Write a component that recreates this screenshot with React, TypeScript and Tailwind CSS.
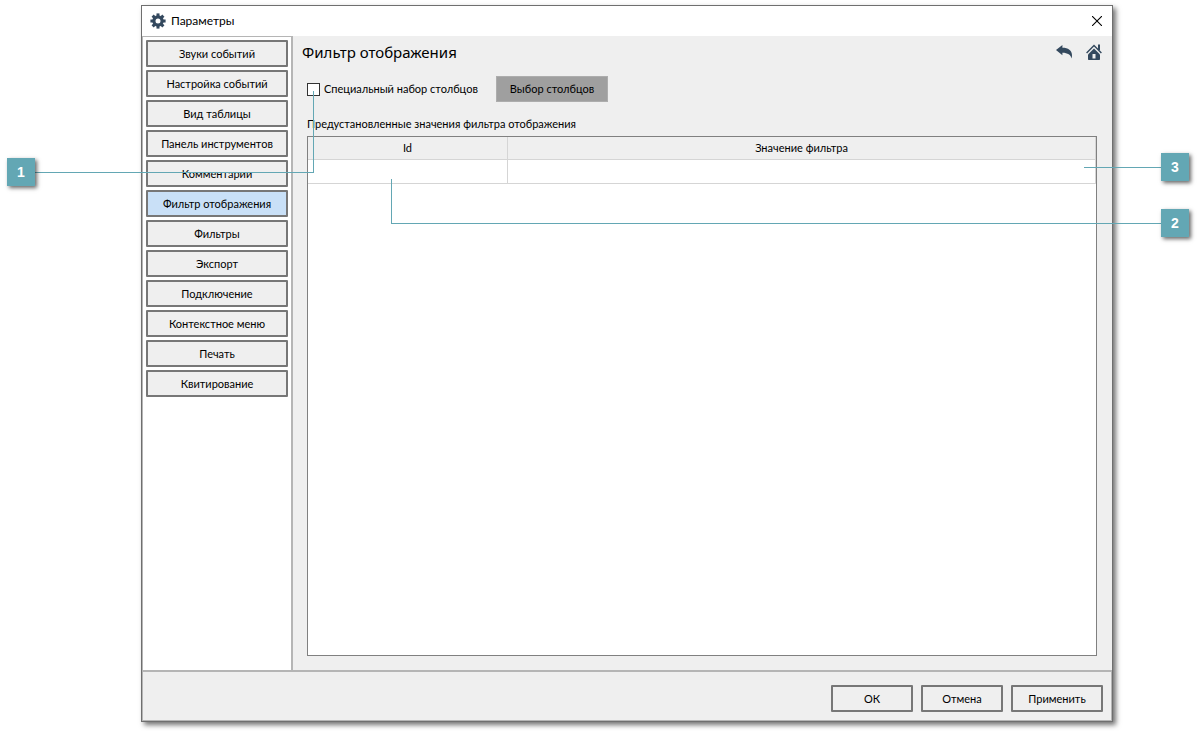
import clsx from "clsx";
import type { ReactNode } from "react";

const sections = [
  "Звуки событий",
  "Настройка событий",
  "Вид таблицы",
  "Панель инструментов",
  "Комментарии",
  "Фильтр отображения",
  "Фильтры",
  "Экспорт",
  "Подключение",
  "Контекстное меню",
  "Печать",
  "Квитирование",
];

const activeSection = "Фильтр отображения";

function GearIcon() {
  return (
    <svg width="16" height="16" viewBox="0 0 16 16" fill="#34495e" aria-hidden="true">
      <circle cx="8" cy="8" r="4.1" fill="none" stroke="#34495e" strokeWidth="3.2" />
      {[0, 45, 90, 135, 180, 225, 270, 315].map((angle) => (
        <path key={angle} d="M6.500 3.200V.4h3v2.800z" transform={`rotate(${angle} 8 8)`} />
      ))}
    </svg>
  );
}

function BackIcon() {
  return (
    <svg width="16" height="14" viewBox="0 0 16 14" fill="#34495e" aria-hidden="true">
      <path d="M0 5 6.400 0v2.700C12.200 2.700 16 5.300 16 10c0 1.300-.1 2.500-.4 3.500-.9-3.500-3.800-5.700-9.200-5.700V10.200z" />
    </svg>
  );
}

function HomeIcon() {
  return (
    <svg width="16" height="16" viewBox="0 0 16 16" aria-hidden="true">
      <path d="M12 .5h2V6h-2z" fill="#34495e" />
      <path d="M.6 9 8 1.500 15.400 9" fill="none" stroke="#34495e" strokeWidth="1.400" />
      <path
        d="M8 4.600 2 10.500V15c0 .6.400 1 1 1h10c.6 0 1-.4 1-1v-4.500z"
        fill="#34495e"
      />
      <path d="M6.500 10h3v4.500h-3z" fill="#efefef" />
    </svg>
  );
}

function CloseIcon() {
  return (
    <svg width="10" height="10" viewBox="0 0 10 10" stroke="#000" strokeWidth="1.1" aria-hidden="true">
      <path d="M0 0 10 10M10 0 0 10" />
    </svg>
  );
}

function OutlineButton({
  children,
  active,
  className,
}: {
  children: ReactNode;
  active?: boolean;
  className?: string;
}) {
  return (
    <button
      type="button"
      className={clsx(
        "flex h-[27px] items-center justify-center rounded-[1px] border-2 border-[#777777] whitespace-nowrap",
        active ? "bg-[#c9e0f7]" : "bg-[#efefef]",
        className
      )}
    >
      {children}
    </button>
  );
}

function Badge({ children, className }: { children: ReactNode; className: string }) {
  return (
    <span
      className={clsx(
        "absolute flex h-7 w-7 items-center justify-center bg-[#63a7b4] font-['Liberation_Sans'] text-sm font-bold text-white shadow-[2px_2px_4px_rgba(0,0,0,0.6)]",
        className
      )}
    >
      {children}
    </span>
  );
}

export default function App() {
  return (
    <div className="relative flex h-screen flex-col bg-white pt-[5px] pr-[87px] pb-[9px] pl-[141px] font-['Lato','Noto_Sans',sans-serif] text-[11px] leading-4 text-black">
      <div className="flex min-h-0 flex-1 flex-col border border-[#6f6f6f] bg-[#efefef] shadow-[3px_3px_5px_rgba(0,0,0,0.55)]">
        {/* Title bar */}
        <header className="flex h-[30px] shrink-0 items-center bg-white pr-[10px] pl-2">
          <GearIcon />
          <h1 className="ml-[5px] flex-1 text-xs">Параметры</h1>
          <button type="button" aria-label="Закрыть">
            <CloseIcon />
          </button>
        </header>

        <div className="flex min-h-0 flex-1">
          {/* Sections */}
          <nav className="flex w-[151px] shrink-0 flex-col gap-[3px] border-t border-r-2 border-l border-[#b5b5b5] bg-white p-[3px]">
            {sections.map((name) => (
              <OutlineButton key={name} active={name === activeSection}>
                {name}
              </OutlineButton>
            ))}
          </nav>

          {/* Display filter */}
          <main className="flex min-w-0 flex-1 flex-col pt-1 pr-[15px] pb-[14px] pl-[14px]">
            <div className="-mx-[5px] flex h-6 items-center">
              <h2 className="flex-1 font-['Noto_Sans',sans-serif] text-[15px]">Фильтр отображения</h2>
              <button type="button" aria-label="Назад" className="mr-[14px]">
                <BackIcon />
              </button>
              <button type="button" aria-label="Домой">
                <HomeIcon />
              </button>
            </div>

            <div className="mt-3 flex items-center">
              <input
                id="custom-columns"
                type="checkbox"
                className="h-[13px] w-[13px] appearance-none border border-[#333333] bg-white checked:bg-[#34495e]"
              />
              <label htmlFor="custom-columns" className="ml-1 w-[172px] whitespace-nowrap">
                Специальный набор столбцов
              </label>
              <button type="button" className="h-[26px] w-28 border border-[#adadad] bg-[#9f9f9f] whitespace-nowrap">
                Выбор столбцов
              </button>
            </div>

            <h3 className="mt-[14px] mb-1">Предустановленные значения фильтра отображения</h3>

            <div className="min-h-0 flex-1 border border-[#808080] bg-white">
              <table className="w-full table-fixed border-separate border-spacing-0">
                <thead>
                  <tr className="h-[23px] bg-[#efefef]">
                    <th className="w-[200px] border-r border-b border-[#d5d5d5] p-0 font-normal">Id</th>
                    <th className="border-r border-b border-[#d5d5d5] p-0 font-normal">Значение фильтра</th>
                  </tr>
                </thead>
                <tbody>
                  <tr className="h-6">
                    <td className="border-r border-b border-[#d5d5d5] p-0" />
                    <td className="border-r border-b border-[#d5d5d5] p-0" />
                  </tr>
                </tbody>
              </table>
            </div>
          </main>
        </div>

        <footer className="flex shrink-0 justify-end gap-2 border-t-2 border-r border-b border-l border-[#b5b5b5] pt-[13px] pr-2 pb-2">
          <OutlineButton className="w-[82px]">ОК</OutlineButton>
          <OutlineButton className="w-[82px]">Отмена</OutlineButton>
          <OutlineButton className="w-[92px]">Применить</OutlineButton>
        </footer>
      </div>

      {/* Callout 1: custom columns checkbox */}
      <div className="pointer-events-none absolute top-[91px] left-[35px] h-[82px] w-[279px] border-r border-b border-[#63a7b4]" />
      <Badge className="top-[158px] left-[7px]">1</Badge>

      {/* Callout 2: id column */}
      <div className="pointer-events-none absolute top-[179px] right-[39px] left-[391px] h-[45px] border-b border-l border-[#63a7b4]" />
      <Badge className="top-[209px] right-[11px]">2</Badge>

      {/* Callout 3: filter value column */}
      <div className="pointer-events-none absolute top-[167px] right-[39px] w-[77px] border-t border-[#63a7b4]" />
      <Badge className="top-[153px] right-[11px]">3</Badge>
    </div>
  );
}
